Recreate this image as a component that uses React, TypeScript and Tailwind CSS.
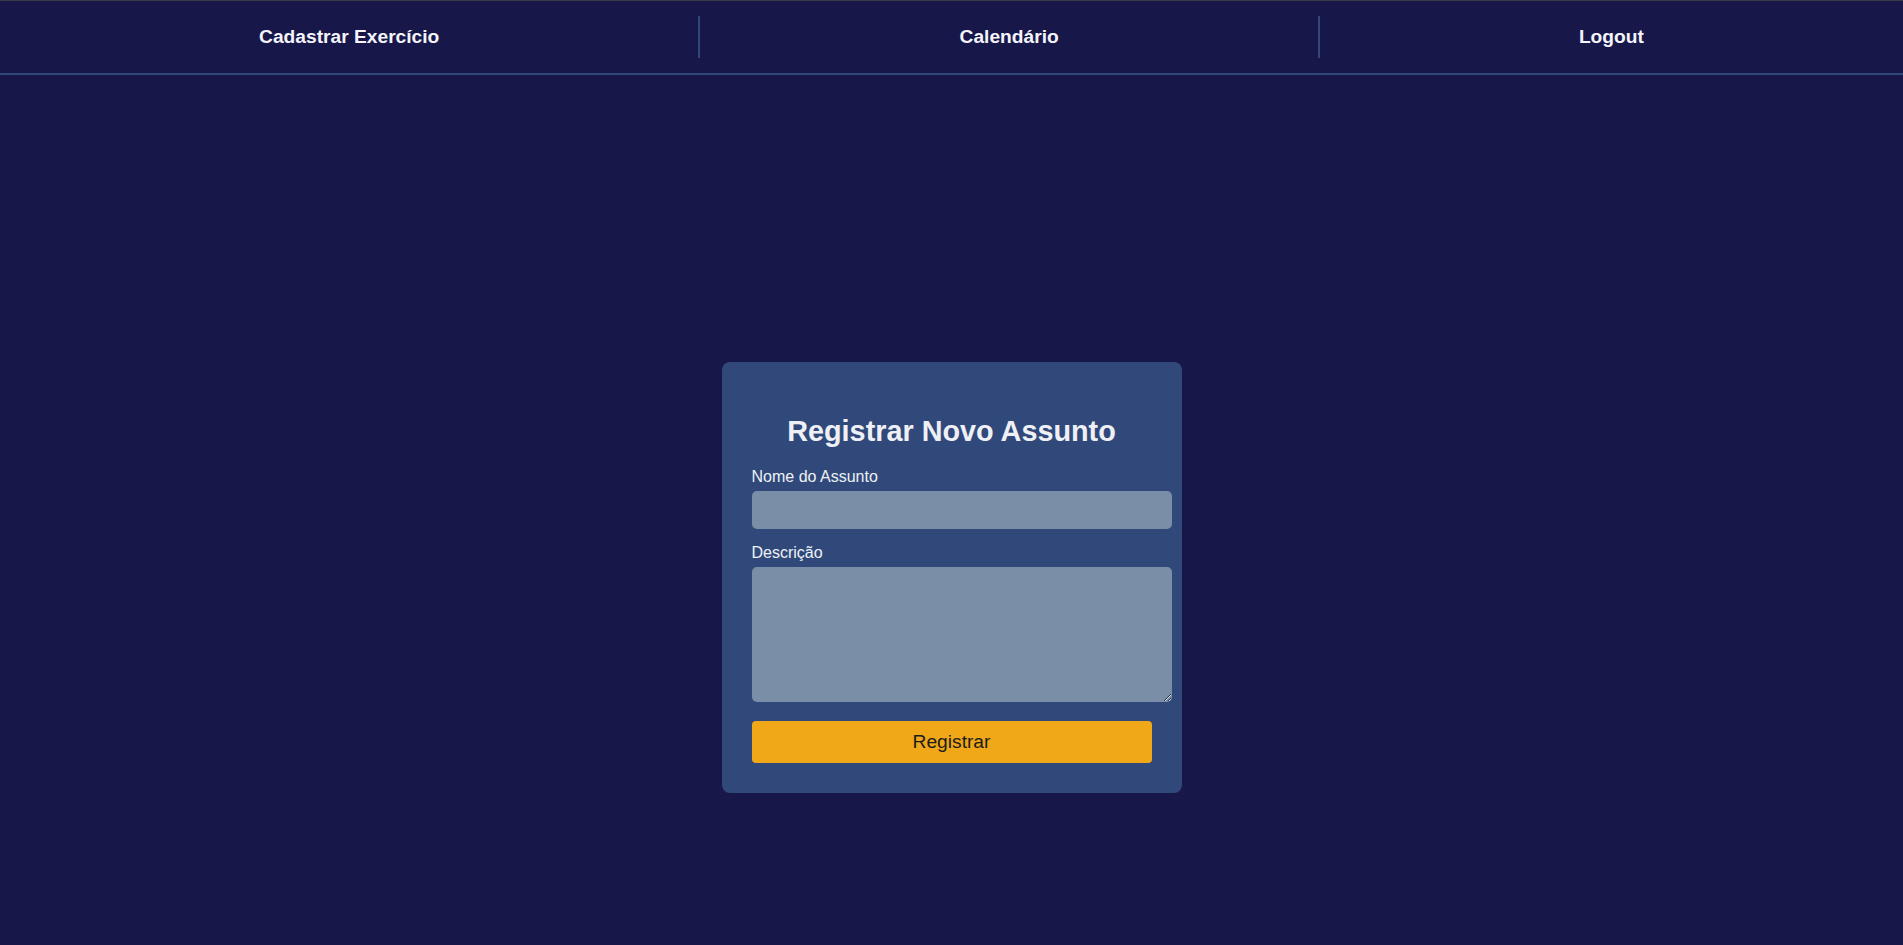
import React from "react";

export default function App() {
  return (
    <div
      className="min-h-screen bg-[#171849] text-white"
      style={{ fontFamily: '"Liberation Sans", Arial, sans-serif' }}
    >
      <nav className="flex border-t border-t-[#3a3a48] border-b-2 border-b-[#30497a] py-[15px]">
        <a className="flex-auto text-center py-[10px] text-[19.2px] leading-[22px] font-bold text-[#f4f4fa]">
          Cadastrar Exercício
        </a>
        <a className="flex-auto text-center py-[10px] text-[19.2px] leading-[22px] font-bold text-[#f4f4fa] border-l-2 border-l-[#30497a]">
          Calendário
        </a>
        <a className="flex-auto text-center py-[10px] text-[19.2px] leading-[22px] font-bold text-[#f4f4fa] border-l-2 border-l-[#30497a]">
          Logout
        </a>
      </nav>
      <main className="flex justify-center pt-[287px]">
        <div className="w-[460px] rounded-lg bg-[#30497a] p-[30px]">
          <h2 className="mt-[23px] mb-[20px] text-center text-[28.8px] leading-[33px] font-bold text-[#eef0f6]">
            Registrar Novo Assunto
          </h2>
          <label className="block text-[16px] leading-[18px] mb-[5px] text-[#eef1f6]">
            Nome do Assunto
          </label>
          <input
            type="text"
            className="block w-[420px] h-[38px] mb-[15px] rounded-[5px] bg-[#7a8fa7] px-[10px] text-[16px] outline-none"
          />
          <label className="block text-[16px] leading-[18px] mb-[5px] text-[#eef1f6]">
            Descrição
          </label>
          <textarea className="block w-[420px] h-[135px] mb-[19px] rounded-[5px] bg-[#7a8fa7] p-[10px] text-[16px] outline-none" />
          <button className="block w-[400px] h-[42px] rounded-[4px] bg-[#f0a818] text-[19.2px] leading-[22px] text-[#1c1c1c]">
            Registrar
          </button>
        </div>
      </main>
    </div>
  );
}
